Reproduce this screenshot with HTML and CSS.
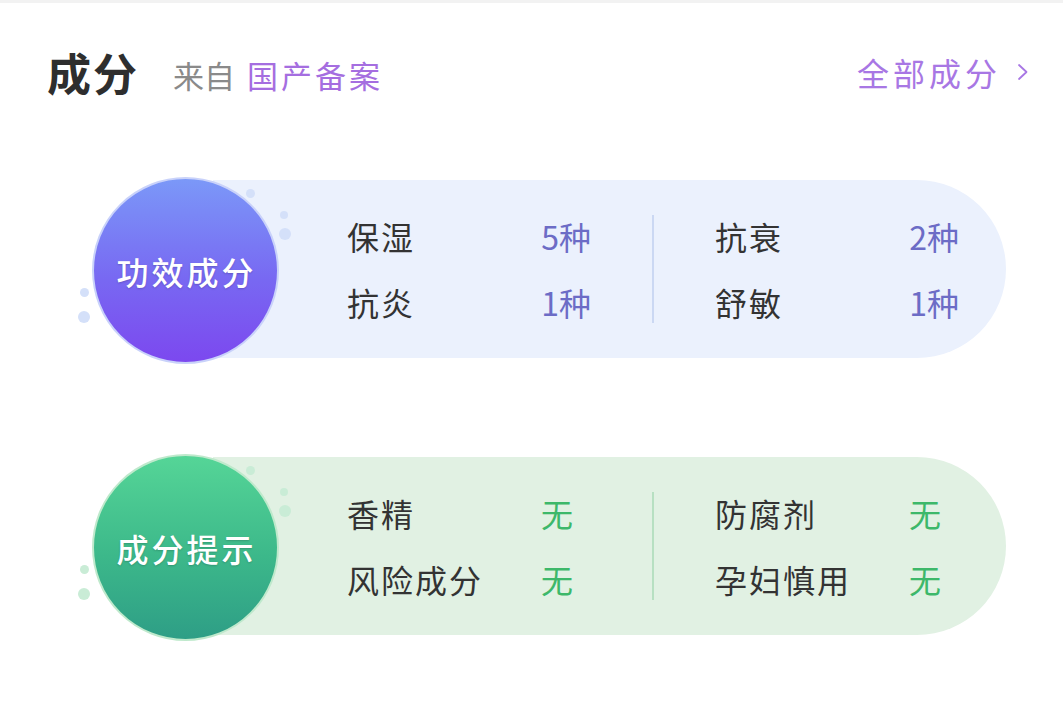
FILE: index.html
```html
<!DOCTYPE html>
<html lang="zh-CN">
<head>
<meta charset="utf-8">
<title>成分</title>
<link rel="stylesheet" href="styles.css">
</head>
<body>
<div class="topbar"></div>
<header class="header">
  <div class="title-group">
    <h1 class="title">成分</h1>
    <span class="source">来自<span class="source-link">国产备案</span></span>
  </div>
  <a class="more">全部成分<svg class="chev" width="12" height="18" viewBox="0 0 12 18"><path d="M2 2 L9.5 9 L2 16" fill="none" stroke="#a877e4" stroke-width="1.8" stroke-linecap="round" stroke-linejoin="round"/></svg></a>
</header>

<section class="cards">
  <div class="card card-blue">
    <div class="badge">
      <span class="dot d1"></span><span class="dot d2"></span><span class="dot d3"></span><span class="dot d4"></span><span class="dot d5"></span>
      <div class="circle">功效成分</div>
    </div>
    <div class="band">
      <div class="col">
        <div class="row"><span class="label">保湿</span><span class="value">5种</span></div>
        <div class="row"><span class="label">抗炎</span><span class="value">1种</span></div>
      </div>
      <div class="divider"></div>
      <div class="col">
        <div class="row"><span class="label">抗衰</span><span class="value">2种</span></div>
        <div class="row"><span class="label">舒敏</span><span class="value">1种</span></div>
      </div>
    </div>
  </div>

  <div class="card card-green">
    <div class="badge">
      <span class="dot d1"></span><span class="dot d2"></span><span class="dot d3"></span><span class="dot d4"></span><span class="dot d5"></span>
      <div class="circle">成分提示</div>
    </div>
    <div class="band">
      <div class="col">
        <div class="row"><span class="label">香精</span><span class="value">无</span></div>
        <div class="row"><span class="label">风险成分</span><span class="value">无</span></div>
      </div>
      <div class="divider"></div>
      <div class="col">
        <div class="row"><span class="label">防腐剂</span><span class="value">无</span></div>
        <div class="row"><span class="label">孕妇慎用</span><span class="value">无</span></div>
      </div>
    </div>
  </div>
</section>
</body>
</html>
```

FILE: styles.css
```css
* { box-sizing: border-box; }
html, body {
  margin: 0;
  padding: 0;
  background: #ffffff;
}
body {
  width: 1063px;
  height: 717px;
  overflow: hidden;
  font-family: "Noto Sans CJK SC", "Noto Sans", sans-serif;
  color: #333333;
}
.topbar {
  height: 3px;
  background: #f2f2f2;
}
.header {
  height: 60px;
  margin-top: 39px;
  padding: 0 34px 0 47px;
  display: flex;
  align-items: center;
  justify-content: space-between;
}
.title-group {
  display: flex;
  align-items: center;
}
.title {
  margin: 0;
  font-size: 44px;
  font-weight: 700;
  line-height: 60px;
  color: #2e2e2e;
  letter-spacing: 2px;
}
.source {
  margin-left: 34px;
  margin-top: 4px;
  font-size: 31px;
  color: #8a8a8a;
  letter-spacing: 0;
}
.source-link {
  margin-left: 12px;
  color: #a56ee0;
  letter-spacing: 3px;
}
.more {
  display: flex;
  align-items: center;
  font-size: 32px;
  color: #a877e4;
  letter-spacing: 4px;
}
.chev {
  margin-left: 16px;
}

.cards {
  margin-top: 73px;
  padding-left: 92px;
  display: flex;
  flex-direction: column;
  gap: 90px;
}
.card {
  display: flex;
  align-items: center;
  height: 187px;
}
.badge {
  position: relative;
  width: 187px;
  height: 187px;
  margin-top: 4px;
  flex: none;
  z-index: 2;
}
.circle {
  width: 187px;
  height: 187px;
  border-radius: 50%;
  display: flex;
  align-items: center;
  justify-content: center;
  color: #ffffff;
  font-size: 32px;
  font-weight: 500;
  letter-spacing: 3px;
  padding-left: 2px;
  text-shadow: 0 1px 2px rgba(0, 0, 0, 0.18);
}
.card-blue .circle {
  background: linear-gradient(180deg, #7b98f8 0%, #7868f2 55%, #7c48ef 100%);
  border: 2px solid #c9d2fa;
}
.card-green .circle {
  background: linear-gradient(180deg, #55d597 0%, #3cb88a 55%, #2e9e86 100%);
  border: 2px solid #bfe9cc;
}
.dot {
  position: absolute;
  border-radius: 50%;
}
.card-blue .dot { background: #d4e0f9; }
.card-green .dot { background: #c9ecd6; }
.d1 { width: 9px; height: 9px; left: 154px; top: 12px; }
.d2 { width: 8px; height: 8px; left: 188px; top: 34px; }
.d3 { width: 12px; height: 12px; left: 187px; top: 51px; }
.d4 { width: 9px; height: 9px; left: -12px; top: 111px; }
.d5 { width: 12px; height: 12px; left: -14px; top: 134px; }

.band {
  margin-left: -66px;
  width: 793px;
  height: 178px;
  border-radius: 0 89px 89px 0;
  padding-left: 134px;
  display: flex;
  align-items: center;
}
.card-blue .band { background: #ebf1fd; }
.card-green .band { background: #e1f1e3; }
.col {
  width: 244px;
  display: flex;
  flex-direction: column;
  gap: 20px;
}
.row {
  display: flex;
  justify-content: space-between;
  align-items: center;
  height: 46px;
  font-size: 32px;
  letter-spacing: 2px;
}
.label { color: #333333; }
.card-blue .value { color: #6c6cc6; letter-spacing: 0; }
.card-green .value { color: #3db86a; margin-right: 16px; }
.divider {
  width: 2px;
  height: 108px;
  margin: 0 61px 0 61px;
}
.card-blue .divider { background: #cbd8f3; }
.card-green .divider { background: #b7e0c2; }
```
